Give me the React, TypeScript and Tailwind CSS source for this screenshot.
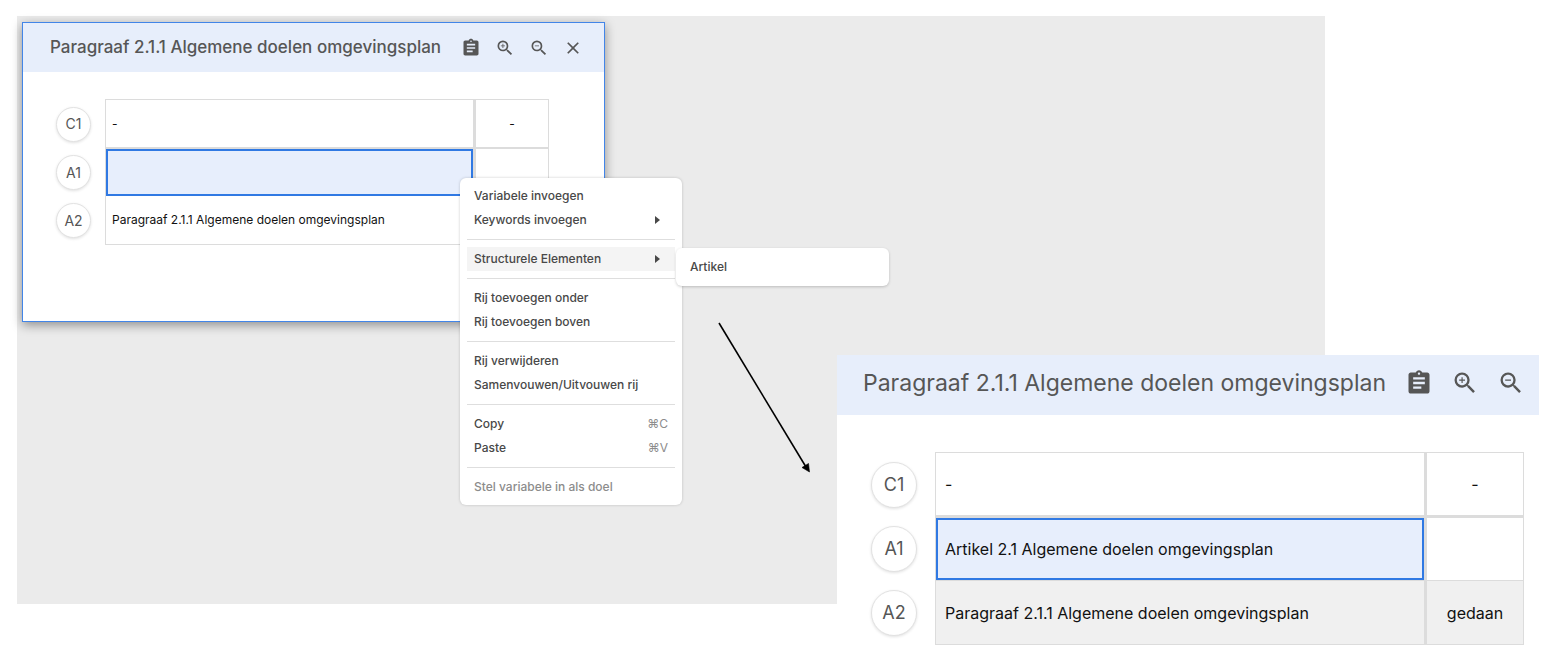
import React from 'react'
import clsx from 'clsx'
import { MdAssignment, MdClose, MdZoomIn, MdZoomOut } from 'react-icons/md'

type Row = { code: string; text: string; status: string; selected?: boolean; shaded?: boolean }

const TITLE = 'Paragraaf 2.1.1 Algemene doelen omgevingsplan'

const before: Row[] = [
  { code: 'C1', text: '-', status: '-' },
  { code: 'A1', text: '', status: '', selected: true },
  { code: 'A2', text: TITLE, status: '' },
]

const after: Row[] = [
  { code: 'C1', text: '-', status: '-' },
  { code: 'A1', text: 'Artikel 2.1 Algemene doelen omgevingsplan', status: '', selected: true },
  { code: 'A2', text: TITLE, status: 'gedaan', shaded: true },
]

type MenuEntry = { label: string; shortcut?: string; submenu?: boolean; active?: boolean; disabled?: boolean }

const menu: MenuEntry[][] = [
  [{ label: 'Variabele invoegen' }, { label: 'Keywords invoegen', submenu: true }],
  [{ label: 'Structurele Elementen', submenu: true, active: true }],
  [{ label: 'Rij toevoegen onder' }, { label: 'Rij toevoegen boven' }],
  [{ label: 'Rij verwijderen' }, { label: 'Samenvouwen/Uitvouwen rij' }],
  [
    { label: 'Copy', shortcut: '⌘C' },
    { label: 'Paste', shortcut: '⌘V' },
  ],
  [{ label: 'Stel variabele in als doel', disabled: true }],
]

function PanelHeader({ large }: { large?: boolean }) {
  const icon = large ? 'size-7' : 'size-5'
  return (
    <header
      className={clsx(
        'flex items-center bg-[#e7eefb] text-[#565656]',
        large ? 'h-[60px] gap-[18px] pr-[14px] pb-1 pl-[26px]' : 'h-[49px] gap-[14px] pr-[21px] pl-[27px]',
      )}
    >
      <h2 className={clsx('flex-1 whitespace-nowrap', large ? 'text-[23px]' : 'text-[17px] font-medium')}>{TITLE}</h2>
      <button type="button" aria-label="Klembord">
        <MdAssignment className={icon} />
      </button>
      <button type="button" aria-label="Inzoomen">
        <MdZoomIn className={icon} />
      </button>
      <button type="button" aria-label="Uitzoomen">
        <MdZoomOut className={icon} />
      </button>
      {!large && (
        <button type="button" aria-label="Sluiten">
          <MdClose className={icon} />
        </button>
      )}
    </header>
  )
}

function RowTable({ rows, large }: { rows: Row[]; large?: boolean }) {
  const heights = large ? ['h-[66px]', 'h-[62px]', 'h-[65px]'] : ['h-[50px]', 'h-[47px]', 'h-[49px]']
  return (
    <table
      className={clsx(
        'table-fixed border-separate border-spacing-0 text-[#111]',
        large ? 'w-[653px] text-base' : 'w-[493px] text-xs',
      )}
    >
      <colgroup>
        <col className={large ? 'w-16' : 'w-[49px]'} />
        <col />
        <col className={large ? 'w-[100px]' : 'w-[76px]'} />
      </colgroup>
      <tbody>
        {rows.map((row, i) => {
          const line = clsx(
            'border-[#dcdcdc] py-0',
            i === 0 && 'border-t',
            i === 0 && (large ? 'border-b-3' : 'border-b-2'),
            i === 2 && 'border-b',
            i === 2 && large && 'border-t',
            row.shaded && 'bg-[#f0f0f0]',
          )
          return (
            <tr key={row.code} className={heights[i]}>
              <th scope="row" className="p-0 font-normal">
                <span
                  className={clsx(
                    'flex items-center justify-center rounded-full border border-[#e2e2e2] bg-white text-[#565656] shadow-[0_1px_3px_rgba(0,0,0,0.12)]',
                    large ? 'size-[46px] text-lg' : 'size-[35px] text-sm',
                  )}
                >
                  {row.code}
                </span>
              </th>
              <td
                className={clsx(
                  line,
                  'border-l',
                  large ? 'px-[9px]' : 'px-[6px]',
                  row.selected && 'bg-[#e7eefc] shadow-[inset_0_0_0_2px_#3079e3]',
                )}
              >
                {row.text}
              </td>
              <td className={clsx(line, 'border-r border-l-3 px-0 text-center')}>{row.status}</td>
            </tr>
          )
        })}
      </tbody>
    </table>
  )
}

function MenuButton({ entry }: { entry: MenuEntry }) {
  return (
    <button
      type="button"
      role="menuitem"
      disabled={entry.disabled}
      className={clsx(
        'flex h-6 w-full items-center justify-between px-[7px] text-left font-medium',
        entry.active && 'bg-[#f4f4f4]',
        entry.disabled && 'text-[#8c8c8c]',
      )}
    >
      {entry.label}
      {entry.shortcut && <kbd className="font-[Inter,sans-serif] font-normal text-[#8c8c8c]">{entry.shortcut}</kbd>}
      {entry.submenu && (
        <svg viewBox="0 0 5 8" className="mr-2 h-2 w-[5px]" fill="currentColor">
          <path d="M0 0L5 4L0 8Z" />
        </svg>
      )}
    </button>
  )
}

function ContextMenu() {
  return (
    <div
      role="menu"
      className="absolute top-[162px] left-[443px] w-[222px] rounded-md bg-white px-[7px] py-[6px] text-xs text-[#484848] shadow-[0_0_3px_rgba(0,0,0,0.2)]"
    >
      {menu.map((group, i) => (
        <div key={group[0].label}>
          {i > 0 && <hr className="my-[7px] border-[#dedede]" />}
          {group.map((entry) => (
            <MenuButton key={entry.label} entry={entry} />
          ))}
        </div>
      ))}
      <div
        role="menu"
        className="absolute top-[70px] left-[216px] w-[213px] rounded-md bg-white p-[7px] shadow-[0_1px_3px_rgba(0,0,0,0.2)]"
      >
        <MenuButton entry={{ label: 'Artikel' }} />
      </div>
    </div>
  )
}

export default function App() {
  return (
    <main className="relative min-h-screen bg-white pt-4 pr-[221px] pb-[52px] pl-[17px] font-[Inter,sans-serif]">
      <section className="relative min-h-[588px] bg-[#ebebeb] pt-[6px] pl-[5px]">
        <div className="w-[583px] border border-[#4285e8] bg-white shadow-[0_3px_10px_rgba(0,0,0,0.4)]">
          <PanelHeader />
          <div className="pt-[27px] pb-[76px] pl-[33px]">
            <RowTable rows={before} />
          </div>
        </div>
        <ContextMenu />
        {/* arrow from the menu to the resulting panel */}
        <svg className="absolute top-[304px] left-[699px] h-[156px] w-[97px]" viewBox="0 0 97 156">
          <path d="M3 3L90 147" stroke="#000" strokeWidth="1.6" />
          <path d="M93.500 152L86 147.500L92.500 143.500Z" fill="#000" stroke="#000" strokeWidth="0.6" />
        </svg>
      </section>

      <section className="absolute top-[355px] right-[7px] w-[702px] bg-white">
        <PanelHeader large />
        <div className="pt-[37px] pl-[34px]">
          <RowTable rows={after} large />
        </div>
      </section>
    </main>
  )
}
